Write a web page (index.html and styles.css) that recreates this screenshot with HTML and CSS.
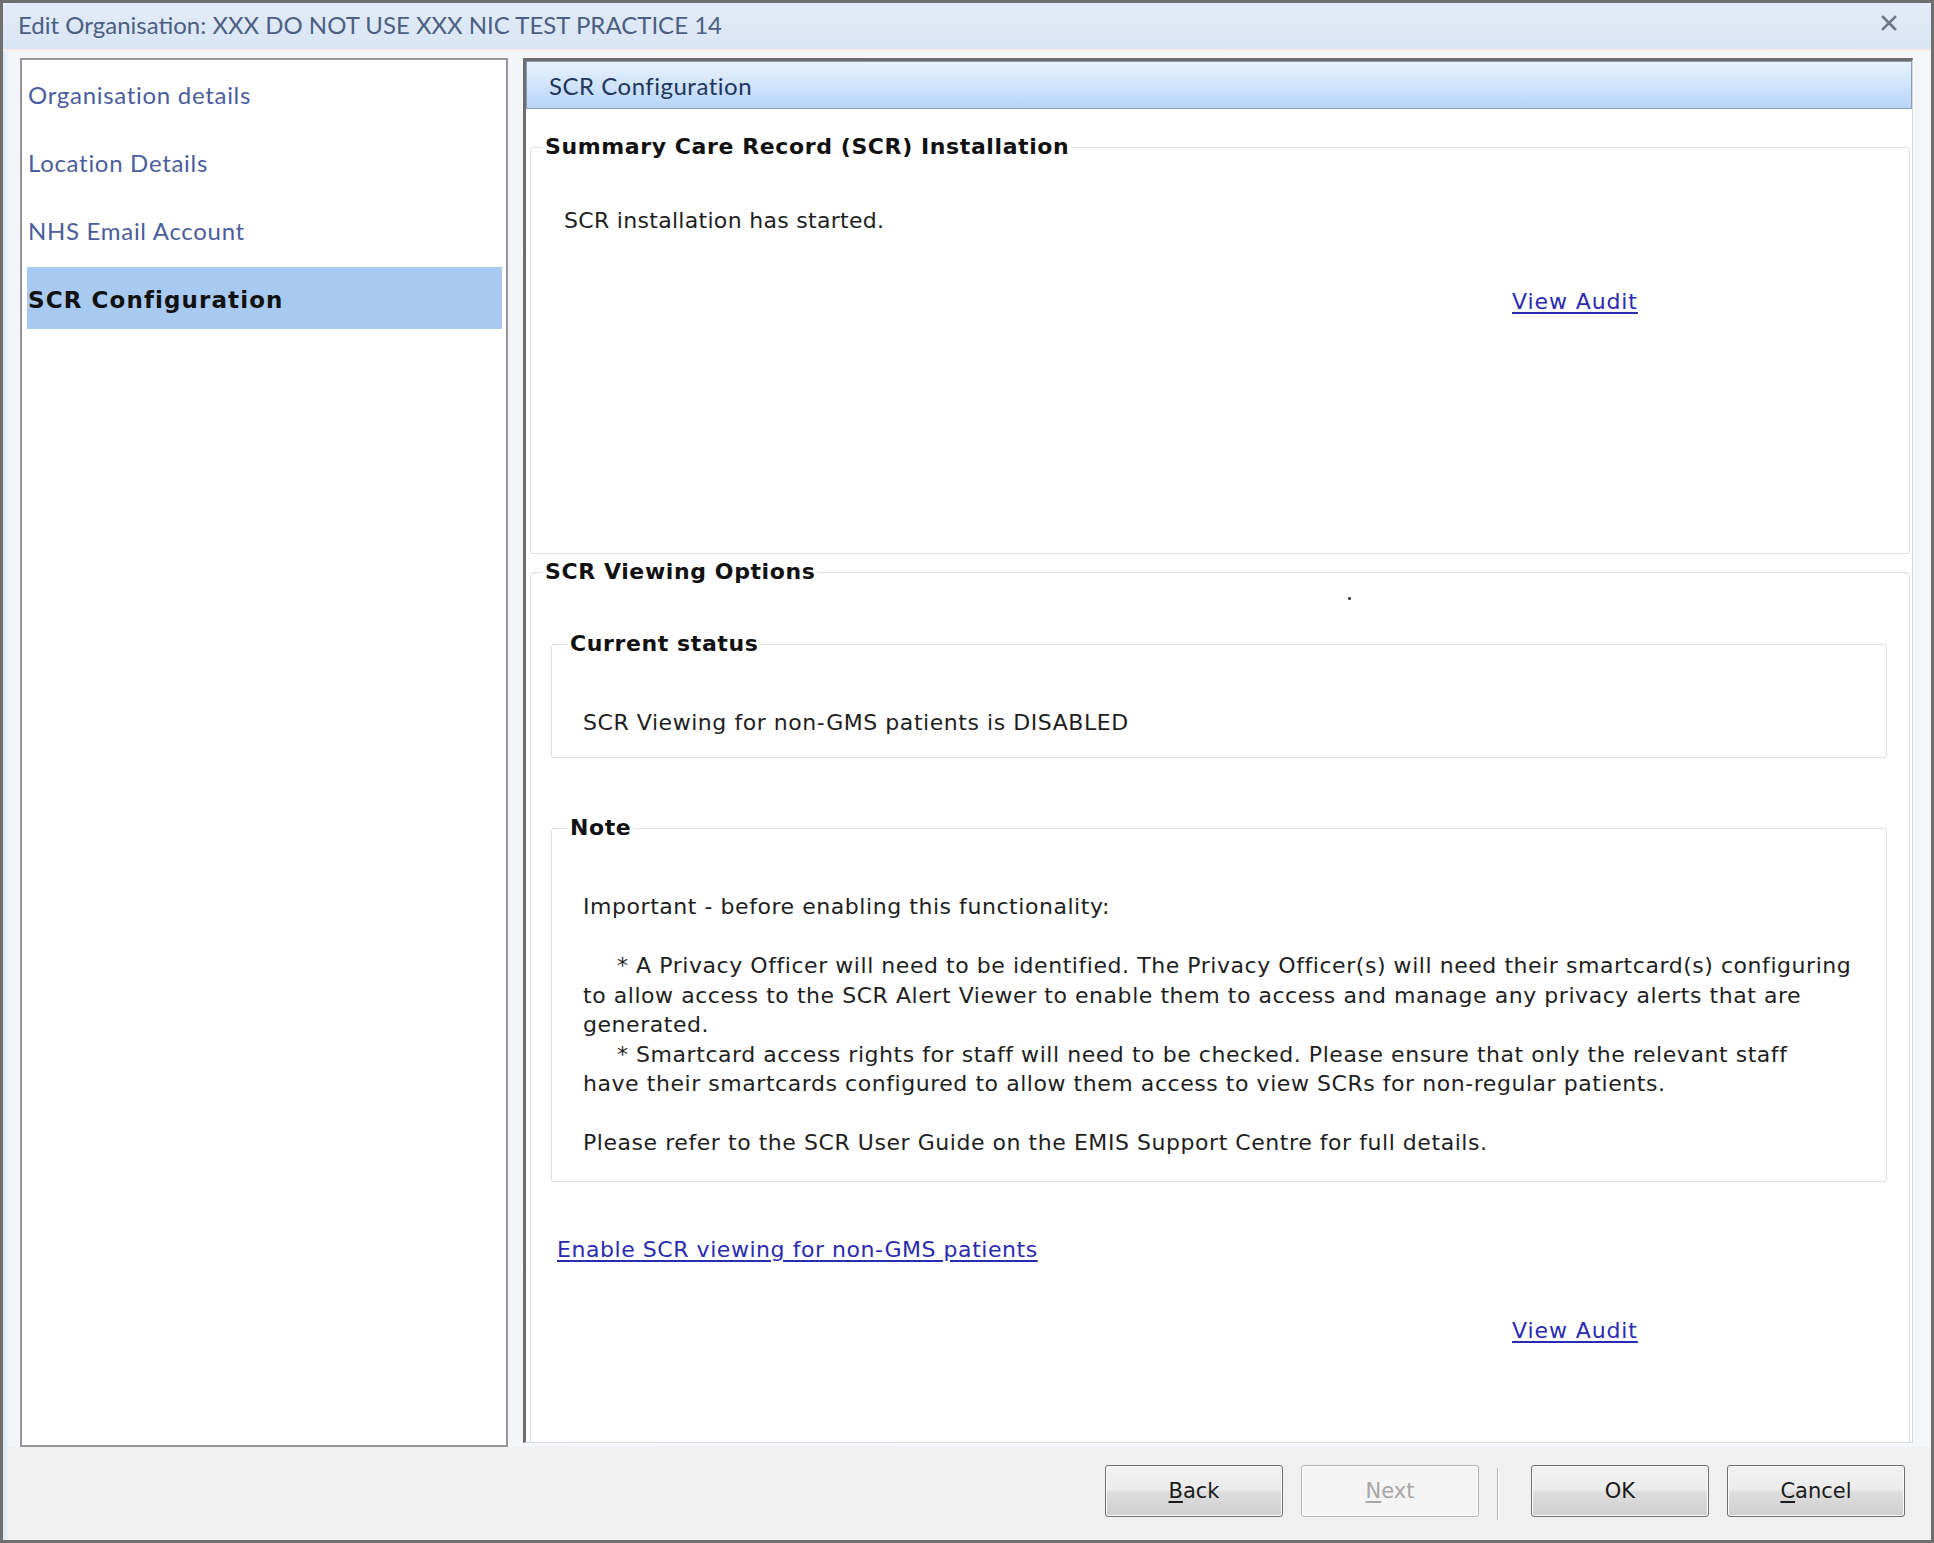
FILE: index.html
```html
<!DOCTYPE html>
<html lang="en">
<head>
<meta charset="utf-8">
<title>Edit Organisation</title>
<link rel="stylesheet" href="styles.css">
</head>
<body>
<div class="window">
  <header class="titlebar">
    <span class="title">Edit Organisation: XXX DO NOT USE XXX NIC TEST PRACTICE 14</span>
    <svg class="close" width="16" height="16" viewBox="0 0 16 16" aria-label="Close">
      <path d="M2 2 L14 14 M14 2 L2 14" stroke="#6b7687" stroke-width="2.6" stroke-linecap="square"/>
    </svg>
  </header>

  <div class="main">
    <nav class="nav">
      <div class="nav-item">Organisation details</div>
      <div class="nav-item">Location Details</div>
      <div class="nav-item">NHS Email Account</div>
      <div class="nav-item selected">SCR Configuration</div>
    </nav>

    <section class="content">
      <div class="content-header">SCR Configuration</div>
      <div class="content-body">
        <fieldset class="group install">
          <legend>Summary Care Record (SCR) Installation</legend>
          <p class="install-status">SCR installation has started.</p>
          <div class="audit-row"><a class="link" href="#">View Audit</a></div>
        </fieldset>

        <fieldset class="group viewing">
          <legend>SCR Viewing Options</legend>
          <div class="speck"></div>

          <fieldset class="subgroup status">
            <legend>Current status</legend>
            <p class="status-text">SCR Viewing for non-GMS patients is DISABLED</p>
          </fieldset>

          <fieldset class="subgroup note">
            <legend>Note</legend>
            <div class="note-text">
              <div class="line">Important - before enabling this functionality:</div>
              <div class="line blank"></div>
              <div class="line"><span class="indent"></span>* A Privacy Officer will need to be identified. The Privacy Officer(s) will need their smartcard(s) configuring</div>
              <div class="line">to allow access to the SCR Alert Viewer to enable them to access and manage any privacy alerts that are</div>
              <div class="line">generated.</div>
              <div class="line"><span class="indent"></span>* Smartcard access rights for staff will need to be checked. Please ensure that only the relevant staff</div>
              <div class="line">have their smartcards configured to allow them access to view SCRs for non-regular patients.</div>
              <div class="line blank"></div>
              <div class="line">Please refer to the SCR User Guide on the EMIS Support Centre for full details.</div>
            </div>
          </fieldset>

          <div class="enable-row"><a class="link" href="#">Enable SCR viewing for non-GMS patients</a></div>
          <div class="audit-row second"><a class="link" href="#">View Audit</a></div>
        </fieldset>
      </div>
    </section>
  </div>

  <footer class="footer">
    <button class="btn" type="button"><u>B</u>ack</button>
    <button class="btn" type="button" disabled><u>N</u>ext</button>
    <span class="separator"></span>
    <button class="btn" type="button">OK</button>
    <button class="btn" type="button"><u>C</u>ancel</button>
  </footer>
</div>
</body>
</html>
```

FILE: styles.css
```css
* {
  box-sizing: border-box;
}

html,
body {
  margin: 0;
  padding: 0;
}

body {
  width: 1934px;
  height: 1543px;
  overflow: hidden;
  background: #6f6f6f;
  font-family: "DejaVu Sans", Verdana, sans-serif;
  color: #1e1e1e;
}

/* Dialog frame */
.window {
  width: 1934px;
  height: 1543px;
  border: 3px solid #6f6f6f;
  display: flex;
  flex-direction: column;
  background: #f0f0f0;
}

.titlebar {
  flex: none;
  height: 46px;
  display: flex;
  align-items: center;
  justify-content: space-between;
  padding: 0 34px 4px 15px;
  background: linear-gradient(#e3ecf8, #d8e5f4);
}

.title {
  font-family: Lato, "Open Sans", sans-serif;
  font-size: 24px;
  color: #4b5f83;
}

.close {
  display: block;
  margin-bottom: 3px;
}

.main {
  flex: none;
  height: 1398px;
  display: flex;
  align-items: flex-start;
  gap: 15px;
  padding: 9px 18px 0 17px;
  border-top: 2px solid #fbece5;
  background: linear-gradient(90deg, #dce7f5 0, #f3f5f8 6px, #f5f6f8 100%);
}

/* Left navigation list */
.nav {
  flex: none;
  width: 488px;
  height: 1389px;
  margin-top: -2px;
  border: 2px solid #979797;
  background: #fff;
  padding: 3px 4px 0 5px;
}

.nav-item {
  height: 62px;
  margin-bottom: 6px;
  display: flex;
  align-items: center;
  padding-left: 1px;
  font-family: Lato, "Open Sans", sans-serif;
  font-size: 24px;
  letter-spacing: 0.7px;
  color: #4b5d9c;
}

.nav-item.selected {
  background: #a9caf0;
  color: #111;
  font-family: "DejaVu Sans", Verdana, sans-serif;
  font-weight: bold;
  font-size: 23px;
  letter-spacing: 1.1px;
  padding-top: 3px;
}

/* Right content panel */
.content {
  flex: none;
  width: 1390px;
  height: 1385px;
  margin-top: -2px;
  display: flex;
  flex-direction: column;
  overflow: hidden;
  background: #fff;
  border-left: 3px solid #6d6d6d;
  border-top: 3px solid #6d6d6d;
  border-right: 1px solid #d6d9dd;
  border-bottom: 1px solid #d6d9dd;
}

.content-header {
  flex: none;
  height: 48px;
  display: flex;
  align-items: center;
  padding-left: 22px;
  border: 1px solid #8c9cb5;
  background: linear-gradient(#e8f2fe 0%, #d3e5fb 45%, #b7d5f9 100%);
  font-family: Lato, "Open Sans", sans-serif;
  font-size: 24px;
  letter-spacing: 0.5px;
  color: #21365a;
}

.content-body {
  flex: 1;
  overflow: hidden;
  padding: 0 2px 0 4px;
}

/* Group boxes */
.group,
.subgroup {
  margin: 0;
  padding: 0;
  min-width: 0;
  border: 1px solid #d9e1e7;
  border-radius: 3px;
}

.group legend,
.subgroup legend {
  padding: 0 3px;
  margin-left: 11px;
  font-weight: bold;
  font-size: 22px;
  letter-spacing: 0.6px;
  line-height: 26px;
  color: #111;
}

.subgroup legend {
  margin-left: 15px;
}

.install {
  margin-top: 25px;
  height: 420px;
}

.install-status,
.status-text,
.note-text,
.enable-row,
.link {
  font-size: 22px;
  letter-spacing: 0.55px;
}

.install-status {
  margin: 48px 0 0 33px;
  line-height: 26px;
  letter-spacing: 0.3px;
}

.audit-row {
  margin-top: 55px;
  padding-left: 981px;
  line-height: 26px;
}

.audit-row .link {
  letter-spacing: 0.9px;
}

.viewing {
  margin-top: 5px;
  height: 940px;
}

.speck {
  width: 3px;
  height: 3px;
  margin: 12px 0 0 817px;
  background: #444;
  border-radius: 1px;
}

.status {
  margin: 31px 22px 0 20px;
  padding-bottom: 21px;
}

.status-text {
  margin: 53px 0 0 31px;
  line-height: 26px;
}

.note {
  margin: 57px 22px 0 20px;
  padding-bottom: 23px;
}

.note-text {
  margin: 51px 0 0 31px;
  line-height: 29.5px;
  white-space: nowrap;
}

.line {
  height: 29.5px;
}

.indent {
  display: inline-block;
  width: 34px;
}

.enable-row {
  margin: 55px 0 0 26px;
  line-height: 26px;
}

.audit-row.second {
  margin-top: 55px;
}

.link {
  color: #2b2bb0;
  text-decoration: underline;
  text-underline-offset: 3px;
}

/* Footer buttons */
.footer {
  flex: 1;
  display: flex;
  justify-content: flex-end;
  align-items: flex-start;
  padding: 18px 26px 0 0;
  background: linear-gradient(90deg, #dce7f5 0, #f0f0f0 6px);
}

.btn {
  width: 178px;
  height: 52px;
  margin-left: 18px;
  padding: 0;
  border: 1px solid #707070;
  border-radius: 3px;
  background: linear-gradient(#f2f2f2 0%, #ebebeb 48%, #dddddd 52%, #cfcfcf 100%);
  box-shadow: inset 0 0 0 1px #fbfbfb;
  font-family: "DejaVu Sans", Verdana, sans-serif;
  font-size: 21px;
  color: #1a1a1a;
}

.btn:disabled {
  border-color: #b4b8bb;
  background: #f4f4f4;
  color: #a6a6a6;
}

.btn u {
  text-underline-offset: 3px;
}

.separator {
  width: 2px;
  height: 52px;
  margin: 3px 14px 0 18px;
  border-left: 1px solid #b9b9b9;
  border-right: 1px solid #ffffff;
}
```
